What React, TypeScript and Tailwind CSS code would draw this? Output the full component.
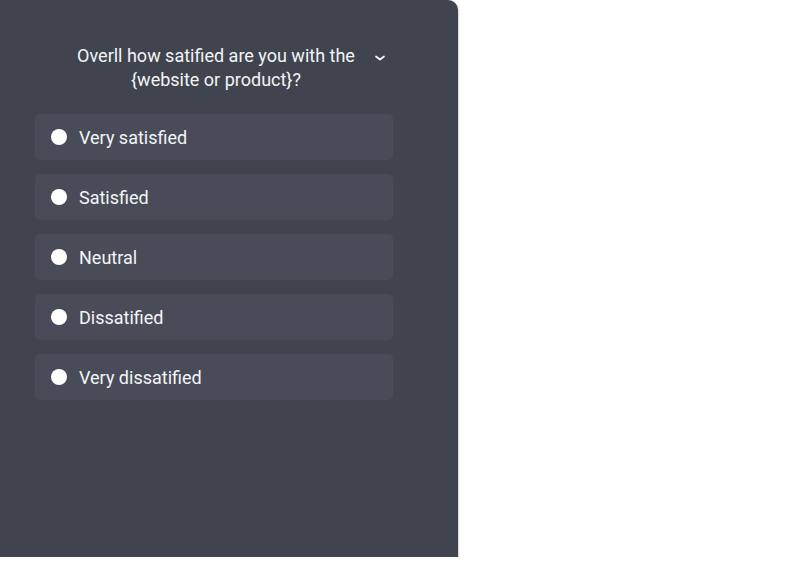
import React from "react";

const options = ["Very satisfied", "Satisfied", "Neutral", "Dissatified", "Very dissatified"];

export default function App() {
  return (
    <div className="w-[810px] h-[561px] bg-white" style={{ fontFamily: "Roboto, 'Liberation Sans', sans-serif" }}>
      <div className="w-[458px] h-[557px] bg-[#40444f] rounded-tr-[10px] shadow-[1px_0_1px_rgba(0,0,0,0.15)] pl-[35px] pt-[44px]">
        <div className="flex items-start w-[358px]">
          <div className="ml-[31px] w-[300px] text-center text-[18px] leading-[24px] text-[#f3f4f6]">
            Overll how satified are you with the {"{website or product}"}?
          </div>
          <svg className="ml-[8px] mt-[10px]" width="12" height="8" viewBox="0 0 12 8" fill="none">
            <path d="M2 2.5 L6 5.5 L10 2.5" stroke="#f3f4f6" strokeWidth="1.8" strokeLinecap="round" strokeLinejoin="round" />
          </svg>
        </div>
        <div className="mt-[22px] flex flex-col gap-[14px] w-[358px]">
          {options.map((o) => (
            <div key={o} className="h-[46px] rounded-[5px] bg-[#494c58] flex items-center pl-[16px]">
              <div className="w-[16px] h-[16px] rounded-full bg-white" />
              <span className="ml-[12px] text-[18px] text-[#f3f4f6]">{o}</span>
            </div>
          ))}
        </div>
      </div>
    </div>
  );
}
